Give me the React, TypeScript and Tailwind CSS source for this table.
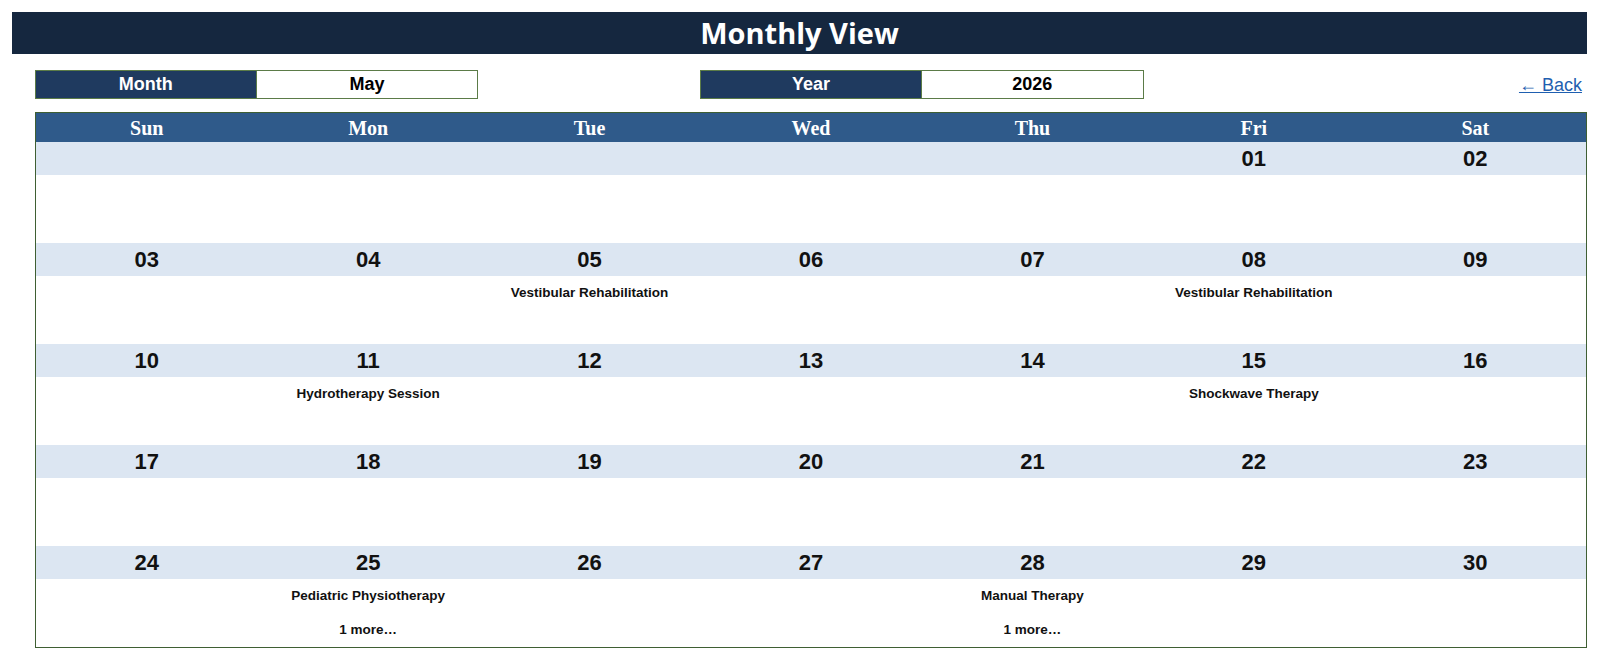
const events: Record<number, string[]> = {
  5: ['Vestibular Rehabilitation'],
  8: ['Vestibular Rehabilitation'],
  11: ['Hydrotherapy Session'],
  15: ['Shockwave Therapy'],
  25: ['Pediatric Physiotherapy', '1 more…'],
  28: ['Manual Therapy', '1 more…'],
}

const dayNames = ['Sun', 'Mon', 'Tue', 'Wed', 'Thu', 'Fri', 'Sat']

// May 2026 starts on a Friday; the sheet only shows five weeks
function buildWeeks() {
  const first = 5
  const days = 31
  const cells: (number | null)[] = []
  for (let i = 0; i < first; i++) cells.push(null)
  for (let d = 1; d <= days; d++) cells.push(d)
  while (cells.length % 7) cells.push(null)
  const weeks: (number | null)[][] = []
  for (let i = 0; i < cells.length; i += 7) weeks.push(cells.slice(i, i + 7))
  return weeks.slice(0, 5)
}

export default function App() {
  const weeks = buildWeeks()

  return (
    <div className="min-h-screen bg-white pl-[12px] pr-[13px] pt-[12px] font-['Liberation_Sans',Arial,sans-serif]">
      {/* Title */}
      <div className="h-[42px] bg-[#15273f] flex items-center justify-center">
        <h1 className="text-white text-[29px] font-bold font-['Open_Sans',sans-serif] leading-none -mt-[2px]">
          Monthly View
        </h1>
      </div>

      <div className="pl-[23px]">
        {/* Month / Year selectors */}
        <div className="grid grid-cols-7 mt-[16px] h-[28px]">
          <div className="col-span-2 flex border border-[#5b7b47]">
            <div className="w-1/2 bg-[#1f3a5f] text-white text-[18px] font-bold flex items-center justify-center border-r border-[#5b7b47]">
              Month
            </div>
            <div className="w-1/2 bg-white text-black text-[18px] font-bold flex items-center justify-center">
              May
            </div>
          </div>
          <div />
          <div className="col-span-2 flex border border-[#5b7b47]">
            <div className="w-1/2 bg-[#1f3a5f] text-white text-[18px] font-bold flex items-center justify-center border-r border-[#5b7b47]">
              Year
            </div>
            <div className="w-1/2 bg-white text-black text-[18px] font-bold flex items-center justify-center">
              2026
            </div>
          </div>
          <div />
          <div className="flex items-center justify-end pr-[5px] pt-[1px]">
            <a href="#" className="text-[#1f5fb0] text-[18px] underline">
              ← Back
            </a>
          </div>
        </div>

        {/* Calendar */}
        <div className="mt-[14px] border border-[#3f5f33]">
          <div className="grid grid-cols-7 h-[29px] bg-[#2f5a8a]">
            {dayNames.map((d) => (
              <div
                key={d}
                className="flex items-center justify-center text-white text-[20px] font-bold font-['Liberation_Serif','Times_New_Roman',serif]"
              >
                {d}
              </div>
            ))}
          </div>

          {weeks.map((week, wi) => (
            <div key={wi}>
              <div className="grid grid-cols-7 h-[33px] bg-[#dce6f2]">
                {week.map((d, i) => (
                  <div key={i} className="flex items-center justify-center text-[22px] font-bold text-[#111]">
                    {d ? String(d).padStart(2, '0') : ''}
                  </div>
                ))}
              </div>
              <div className="grid grid-cols-7 h-[68px] bg-white">
                {week.map((d, i) => (
                  <div key={i} className="flex flex-col items-center">
                    {(d && events[d] ? events[d] : []).map((e) => (
                      <div key={e} className="h-[34px] flex items-center text-[13.5px] font-bold text-[#111]">
                        {e}
                      </div>
                    ))}
                  </div>
                ))}
              </div>
            </div>
          ))}
        </div>
      </div>
    </div>
  )
}
